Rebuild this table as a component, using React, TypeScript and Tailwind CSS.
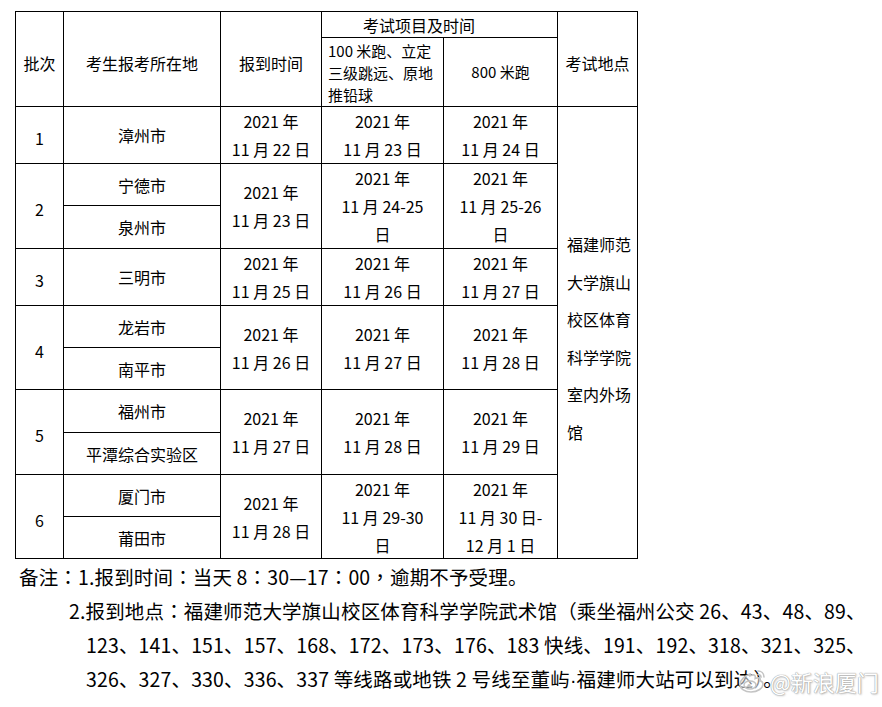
import React from "react";

const font = { fontFamily: '"Noto Sans CJK SC", "Noto Sans", sans-serif' };
const tcFont = { fontFamily: '"Noto Sans CJK TC", sans-serif' };
const latin = { fontFamily: '"Liberation Sans", sans-serif' };

type Row = {
  no: string;
  cities: string[];
  report: string[];
  jump: string[];
  run: string[];
};

const rows: Row[] = [
  { no: "1", cities: ["漳州市"], report: ["2021 年", "11 月 22 日"], jump: ["2021 年", "11 月 23 日"], run: ["2021 年", "11 月 24 日"] },
  { no: "2", cities: ["宁德市", "泉州市"], report: ["2021 年", "11 月 23 日"], jump: ["2021 年", "11 月 24-25", "日"], run: ["2021 年", "11 月 25-26", "日"] },
  { no: "3", cities: ["三明市"], report: ["2021 年", "11 月 25 日"], jump: ["2021 年", "11 月 26 日"], run: ["2021 年", "11 月 27 日"] },
  { no: "4", cities: ["龙岩市", "南平市"], report: ["2021 年", "11 月 26 日"], jump: ["2021 年", "11 月 27 日"], run: ["2021 年", "11 月 28 日"] },
  { no: "5", cities: ["福州市", "平潭综合实验区"], report: ["2021 年", "11 月 27 日"], jump: ["2021 年", "11 月 28 日"], run: ["2021 年", "11 月 29 日"] },
  { no: "6", cities: ["厦门市", "莆田市"], report: ["2021 年", "11 月 28 日"], jump: ["2021 年", "11 月 29-30", "日"], run: ["2021 年", "11 月 30 日-", "12 月 1 日"] },
];

// grid row start for each batch (header takes rows 1-2)
const rowStart = ["row-start-3", "row-start-4", "row-start-6", "row-start-7", "row-start-9", "row-start-11"];
const subStart = [["row-start-3"], ["row-start-4", "row-start-5"], ["row-start-6"], ["row-start-7", "row-start-8"], ["row-start-9", "row-start-10"], ["row-start-11", "row-start-12"]];

const cell = "bg-white flex items-center justify-center text-center";

function Lines({ lines }: { lines: string[] }) {
  return (
    <div className="leading-[28px]">
      {lines.map((l, i) => (
        <div key={i} className="whitespace-nowrap">
          {l}
        </div>
      ))}
    </div>
  );
}

// centered full-width punctuation, as in the original document
const P = ({ c }: { c: string }) => <span style={tcFont}>{c}</span>;

function WeiboLogo() {
  return (
    <svg width="30" height="26" viewBox="0 0 30 26" fill="none">
      <path
        d="M12 6c-5 1.5-10 6-10 10.5C2 21 7 24 13 24c7 0 12-4 12-8 0-2.2-1.8-3-3-3.3.6-1.6.3-3-1.8-3-1.2 0-2.5.6-3 .8.4-1.6.2-3.6-1.8-3.6-1.2 0-2.4.3-3.4.8z"
        stroke="#c4c4c4"
        strokeWidth="1.6"
        fill="rgba(255,255,255,0.55)"
      />
      <ellipse cx="12" cy="17" rx="6" ry="4" stroke="#c4c4c4" strokeWidth="1.4" />
      <circle cx="11" cy="17.5" r="1.6" fill="#c4c4c4" />
      <path d="M20 3c3 0 6 2 6 6" stroke="#c4c4c4" strokeWidth="1.6" strokeLinecap="round" />
      <path d="M20 6.5c1.5 0 3 1 3 2.8" stroke="#c4c4c4" strokeWidth="1.6" strokeLinecap="round" />
    </svg>
  );
}

export default function App() {
  return (
    <div className="w-[882px] h-[707px] bg-white text-black relative overflow-hidden" style={font}>
      <div className="pt-[11px] pl-[15px]">
        <div className="inline-grid bg-black gap-px p-px grid-cols-[47px_156px_100px_121px_113px_79px] grid-rows-[25px_68px_56px_41px_42px_56px_41px_41px_42px_41px_41px_41px] text-[16px]">
          {/* header */}
          <div className={`${cell} col-start-1 row-start-1 row-span-2 pt-[8px]`}>批次</div>
          <div className={`${cell} col-start-2 row-start-1 row-span-2 pt-[8px]`}>考生报考所在地</div>
          <div className={`${cell} col-start-3 row-start-1 row-span-2 pt-[8px]`}>报到时间</div>
          <div className={`${cell} col-start-4 row-start-1 col-span-2 pr-[41px]`}>考试项目及时间</div>
          <div className="bg-white col-start-4 row-start-2 flex items-center pl-[6px] pt-[2px] text-[15px] leading-[22px]">
            <div>
              <div>100 米跑、立定</div>
              <div>三级跳远、原地</div>
              <div>推铅球</div>
            </div>
          </div>
          <div className={`${cell} col-start-5 row-start-2 text-[15px]`}>800 米跑</div>
          <div className={`${cell} col-start-6 row-start-1 row-span-2 pt-[8px]`}>考试地点</div>

          {rows.map((r, i) => {
            const span = r.cities.length === 2 ? "row-span-2" : "row-span-1";
            return (
              <React.Fragment key={r.no}>
                <div className={`${cell} col-start-1 ${rowStart[i]} ${span} pt-[6px]`}>{r.no}</div>
                {r.cities.map((c, j) => (
                  <div key={c} className={`${cell} col-start-2 ${subStart[i][j]}`}>
                    {c}
                  </div>
                ))}
                <div className={`${cell} col-start-3 ${rowStart[i]} ${span}`}>
                  <Lines lines={r.report} />
                </div>
                <div className={`${cell} col-start-4 ${rowStart[i]} ${span}`}>
                  <Lines lines={r.jump} />
                </div>
                <div className={`${cell} col-start-5 ${rowStart[i]} ${span}`}>
                  <Lines lines={r.run} />
                </div>
              </React.Fragment>
            );
          })}

          <div className="bg-white col-start-6 row-start-3 row-span-10 flex items-center pl-[9px] pt-[12px] leading-[37.5px]">
            <div>
              <div>福建师范</div>
              <div>大学旗山</div>
              <div>校区体育</div>
              <div>科学学院</div>
              <div>室内外场</div>
              <div>馆</div>
            </div>
          </div>
        </div>
      </div>

      <div className="mt-[1px] text-[19.5px] leading-[34px] tracking-[0.15px] whitespace-nowrap">
        <div className="pl-[19px]">
          备注<P c="：" />1.报到时间<P c="：" />当天 8<P c="：" />30—17<P c="：" />00<P c="，" />逾期不予受理。
        </div>
        <div className="pl-[69px]">
          2.报到地点<P c="：" />福建师范大学旗山校区体育科学学院武术馆<P c="（" />乘坐福州公交 26、43、48、89、
        </div>
        <div className="pl-[86px]">123、141、151、157、168、172、173、176、183 快线、191、192、318、321、325、</div>
        <div className="pl-[86px]">
          326、327、330、336、337 等线路或地铁 2 号线至董屿<span style={latin}>·</span>福建师大站可以到达<P c="）" />。
        </div>
      </div>

      <div className="absolute left-[738px] top-[668px] flex items-center gap-[2px]">
        <WeiboLogo />
        <span
          className="text-[22px] leading-none text-white"
          style={{ textShadow: "0 0 1px #9a9a9a, 0 0 1px #9a9a9a, 1px 1px 2px #bdbdbd" }}
        >
          @新浪厦门
        </span>
      </div>
    </div>
  );
}
